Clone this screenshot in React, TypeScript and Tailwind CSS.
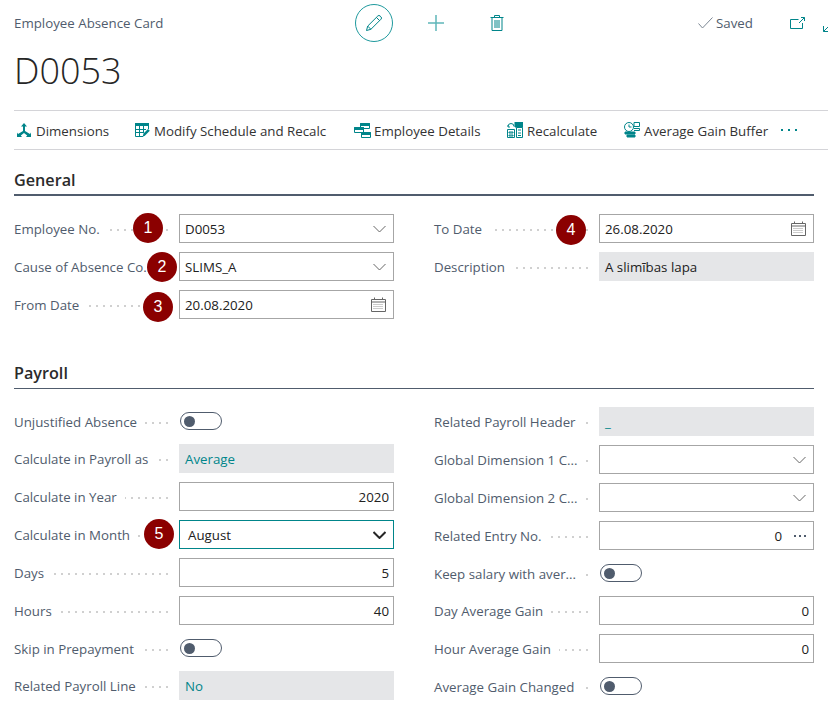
import type { ReactNode } from "react";

const teal = "#00858a";

function Chevron({ dark }: { dark?: boolean }) {
  return (
    <svg width="13" height="8" viewBox="0 0 13 8" fill="none" stroke={dark ? "#262626" : "#666"} strokeWidth={dark ? 2 : 1}>
      <path d="M.5 1l6 6 6-6" />
    </svg>
  );
}

function CalendarIcon() {
  return (
    <svg width="15" height="15" viewBox="0 0 15 15" fill="none" stroke="#666">
      <path d="M.5 2.500h14v12H.5zM.5 5h14M3.500 .5v2M11.500 .5v2" />
      <path d="M2.500 7.500h10M2.500 9.500h10M2.500 11.500h10" stroke="#999" strokeDasharray="1 1" />
    </svg>
  );
}

function Toggle() {
  return (
    <div className="ml-[1px] flex h-[18px] w-[42px] items-center rounded-full border border-[#505c6d] pl-[3px]">
      <div className="h-[11px] w-[11px] rounded-full bg-[#505c6d]" />
    </div>
  );
}

function Dots({ className }: { className: string }) {
  return (
    <div className={`flex ${className}`}>
      <span className="h-[2px] w-[2px] bg-current" />
      <span className="h-[2px] w-[2px] bg-current" />
      <span className="h-[2px] w-[2px] bg-current" />
    </div>
  );
}

function Badge({ n, pos }: { n: number; pos: string }) {
  return (
    <div className={`absolute z-10 flex h-[30px] w-[30px] items-center justify-center rounded-full bg-[#8b0000] font-['Liberation_Sans',sans-serif] text-[16px] text-white ${pos}`}>
      {n}
    </div>
  );
}

type FieldProps = {
  label: string;
  children: ReactNode;
  badge?: ReactNode;
  short?: boolean;
};

function Field({ label, children, badge, short }: FieldProps) {
  return (
    <div className={`relative flex items-center ${short ? "h-[28px]" : "h-[29px]"}`}>
      <div className={`flex w-[154px] shrink-0 items-center ${short ? "pt-[4px]" : "pt-[2px]"}`}>
        <span className="whitespace-nowrap text-[#505c6d]">{label}</span>
        <span className="ml-2 h-[2px] min-w-[2px] flex-1 bg-[repeating-linear-gradient(to_left,#d0d0d0_0,#d0d0d0_2px,transparent_2px,transparent_7px)]" />
      </div>
      <div className="ml-[11px] w-[215px]">{children}</div>
      {badge}
    </div>
  );
}

function Input({ value, align, icon, focus }: { value?: string; align?: "right"; icon?: ReactNode; focus?: boolean }) {
  return (
    <div
      className={`flex h-[29px] items-center border text-[#212121] ${focus ? "border-[#00858a] pl-[8px] pr-[7px]" : "border-[#a6a6a6] pl-[5px] pr-[4px]"}`}
    >
      <span className={`flex-1 pt-[2px] ${align === "right" ? "text-right" : ""}`}>{value}</span>
      {icon && <span className={`flex items-center ${focus ? "" : "mr-[3px]"} ${align === "right" ? "ml-[12px]" : ""}`}>{icon}</span>}
    </div>
  );
}

function ReadOnly({ value, link }: { value: string; link?: boolean }) {
  return (
    <div className={`flex h-[29px] items-center bg-[#e5e6e8] pl-[6px] pt-[2px] ${link ? "text-[#00858a]" : "text-[#212121]"}`}>
      {value}
    </div>
  );
}

function SectionTitle({ title, thick }: { title: string; thick?: boolean }) {
  return (
    <div className={`border-[#505c6d] ${thick ? "border-b-2 pb-[3px]" : "border-b pb-[4px]"}`}>
      <h2 className="text-[16.2px] font-semibold leading-[22px] text-[#2b2b2b]">{title}</h2>
    </div>
  );
}

function ActionItem({ icon, label, className }: { icon: ReactNode; label: string; className: string }) {
  return (
    <div className={`flex shrink-0 items-center ${className}`}>
      {icon}
      <span className="pt-[3px] text-[#333]">{label}</span>
    </div>
  );
}

export default function App() {
  return (
    <div className="h-[721px] w-[828px] overflow-hidden bg-white pl-[14px] font-['Open_Sans',sans-serif] text-[13.3px]">
      {/* title bar */}
      <div className="flex h-[46px] items-center">
        <span className="w-[341px] shrink-0 pt-[2px] text-[#505c6d]">Employee Absence Card</span>
        <div className="flex h-[38px] w-[38px] shrink-0 items-center justify-center rounded-full border border-[#1f9a9e]">
          <svg width="18" height="18" viewBox="0 0 18 18" fill="none" stroke={teal}>
            <path d="M1.500 16.500l1.200-4.400L12.800 2a1.600 1.600 0 012.300 0l.9.9a1.600 1.600 0 010 2.300L5.900 15.300zM2.700 12.100l3.200 3.200M11.400 3.400l3.200 3.200" />
          </svg>
        </div>
        <svg className="ml-[35px] shrink-0" width="16" height="16" viewBox="0 0 16 16" stroke="#5fb6b9" strokeWidth="1.500">
          <path d="M8 0v16M0 8h16" />
        </svg>
        <svg className="ml-[46px] shrink-0" width="14" height="16" viewBox="0 0 14 16" fill="none" stroke={teal}>
          <path d="M.5 2.500h13M4.500 2.500v-2h5v2M2 2.500v13h10v-13M5 5v8M7 5v8M9 5v8" />
        </svg>
        <svg className="ml-[194px] shrink-0" width="15" height="12" viewBox="0 0 15 12" fill="none" stroke="#7c8794">
          <path d="M.5 6.500l4 4.500L14.500 .5" />
        </svg>
        <span className="ml-[3px] w-[36px] shrink-0 pt-[2px] text-[#505c6d]">Saved</span>
        <svg className="ml-[38px] shrink-0" width="15" height="12" viewBox="0 0 15 12" fill="none" stroke={teal}>
          <path d="M12.500 6v5.500H.5v-9h8M9 6l5.500-5.500M11 .5h3.500V4" />
        </svg>
        <svg className="ml-[18px] mt-[6px] shrink-0" width="12" height="12" viewBox="0 0 12 12" fill="none" stroke={teal}>
          <path d="M.5 11.500L6 6M.5 6v5.500H6" />
        </svg>
      </div>

      <h1 className="h-[64px] text-[36px] font-light leading-[50px] text-[#262626]">D0053</h1>

      {/* action bar */}
      <div className="flex h-[40px] items-center border-y border-[#d4d4d8]">
        <ActionItem
          className="w-[120px]"
          label="Dimensions"
          icon={
            <svg className="ml-[3px] mr-[5px]" width="14" height="14" viewBox="0 0 14 14" fill={teal}>
              <path d="M7 0l3 3.500H8V8L13 11l1-1.500V14H9l1.200-1.600L7 10l-3.200 2.400L5 14H0V9.500L1 11l5-3V3.500H4z" />
            </svg>
          }
        />
        <ActionItem
          className="ml-[1px] w-[219px]"
          label="Modify Schedule and Recalc"
          icon={
            <svg className="mr-[4px]" width="15" height="15" viewBox="0 0 15 15" fill="none">
              <path d="M0 0h14v3H0z" fill={teal} />
              <path d="M.5 3v10.500H8M13.500 3v3M0 6.500h11M0 9.500h8M4.500 3v10M8.500 3v7" stroke={teal} />
              <path d="M7.500 14l1-3.500L13 6l1.800 1.800-4.500 4.500z" fill={teal} />
            </svg>
          }
        />
        <ActionItem
          className="w-[153px]"
          label="Employee Details"
          icon={
            <svg className="mr-[3px]" width="17" height="15" viewBox="0 0 17 15" fill="none" stroke={teal}>
              <path d="M6.500 .5h9v5h-9z" fill="#fff" />
              <path d="M6.500 .5h9v2h-9z" fill={teal} />
              <path d="M.5 4.500h9v5h-9z" fill="#fff" />
              <path d="M.5 4.500h9v2h-9z" fill={teal} />
              <path d="M7.500 9.500h9v5h-9z" fill="#fff" />
              <path d="M7.500 9.500h9v2h-9z" fill={teal} />
            </svg>
          }
        />
        <ActionItem
          className="w-[116px]"
          label="Recalculate"
          icon={
            <svg className="mr-[4px]" width="16" height="16" viewBox="0 0 16 16" fill="none" stroke={teal}>
              <path d="M7 4.500a3 3 0 10-6 0M1 3v2h2" />
              <path d="M8 0h8v5H8z" fill={teal} />
              <path d="M.5 7.500h7v8h-7zM2 10h4v1H2zM2 13h4v1H2z" />
              <path d="M9.500 5.500h6v10h-6zM11 8h3M11 11h3M11 13.500h3" />
            </svg>
          }
        />
        <ActionItem
          className="w-[158px]"
          label="Average Gain Buffer"
          icon={
            <svg className="mr-[4px]" width="17" height="16" viewBox="0 0 17 16" fill="none" stroke={teal}>
              <circle cx="6" cy="5" r="4.500" />
              <path d="M6 2.500V5h2.500M11 .5h5.500v4H11zM11 6.500h5.500v2H11" />
              <path d="M2 10h10v2H2zM4 13h8v2H4z" fill={teal} />
            </svg>
          }
        />
        <Dots className="gap-[5px] text-[#00858a]" />
      </div>

      <div className="w-[800px]">
        {/* General */}
        <div className="mt-[19px]">
          <SectionTitle title="General" thick />
          <div className="mt-[18px] grid grid-cols-[380px_380px] gap-x-[40px]">
            <div className="flex flex-col gap-[9px]">
              <Field label="Employee No." badge={<Badge n={1} pos="left-[119px] top-[-1px]" />}>
                <Input value="D0053" icon={<Chevron />} />
              </Field>
              <Field label="Cause of Absence Co..." badge={<Badge n={2} pos="left-[133px] top-0" />}>
                <Input value="SLIMS_A" icon={<Chevron />} />
              </Field>
              <Field label="From Date" badge={<Badge n={3} pos="left-[129px] top-[2px]" />}>
                <Input value="20.08.2020" icon={<CalendarIcon />} />
              </Field>
            </div>
            <div className="flex flex-col gap-[9px]">
              <Field label="To Date" badge={<Badge n={4} pos="left-[122px] top-[1px]" />}>
                <Input value="26.08.2020" icon={<CalendarIcon />} />
              </Field>
              <Field label="Description">
                <ReadOnly value="A slimības lapa" />
              </Field>
            </div>
          </div>
        </div>

        {/* Payroll */}
        <div className="mt-[43px]">
          <SectionTitle title="Payroll" />
          <div className="mt-[18px] grid grid-cols-[380px_380px] gap-x-[40px]">
            <div className="flex flex-col gap-[9px]">
              <Field label="Unjustified Absence" short>
                <Toggle />
              </Field>
              <Field label="Calculate in Payroll as">
                <ReadOnly value="Average" link />
              </Field>
              <Field label="Calculate in Year">
                <Input value="2020" align="right" />
              </Field>
              <Field label="Calculate in Month" badge={<Badge n={5} pos="left-[130px] top-[-1px]" />}>
                <Input value="August" icon={<Chevron dark />} focus />
              </Field>
              <Field label="Days">
                <Input value="5" align="right" />
              </Field>
              <Field label="Hours">
                <Input value="40" align="right" />
              </Field>
              <Field label="Skip in Prepayment" short>
                <Toggle />
              </Field>
              <Field label="Related Payroll Line">
                <ReadOnly value="No" link />
              </Field>
            </div>
            <div className="flex flex-col gap-[9px]">
              <Field label="Related Payroll Header">
                <ReadOnly value="_" link />
              </Field>
              <Field label="Global Dimension 1 C...">
                <Input icon={<Chevron />} />
              </Field>
              <Field label="Global Dimension 2 C...">
                <Input icon={<Chevron />} />
              </Field>
              <Field label="Related Entry No.">
                <Input value="0" align="right" icon={<Dots className="gap-[3px] text-[#505c6d]" />} />
              </Field>
              <Field label="Keep salary with aver..." short>
                <Toggle />
              </Field>
              <Field label="Day Average Gain">
                <Input value="0" align="right" />
              </Field>
              <Field label="Hour Average Gain">
                <Input value="0" align="right" />
              </Field>
              <Field label="Average Gain Changed" short>
                <Toggle />
              </Field>
            </div>
          </div>
        </div>
      </div>
    </div>
  );
}
